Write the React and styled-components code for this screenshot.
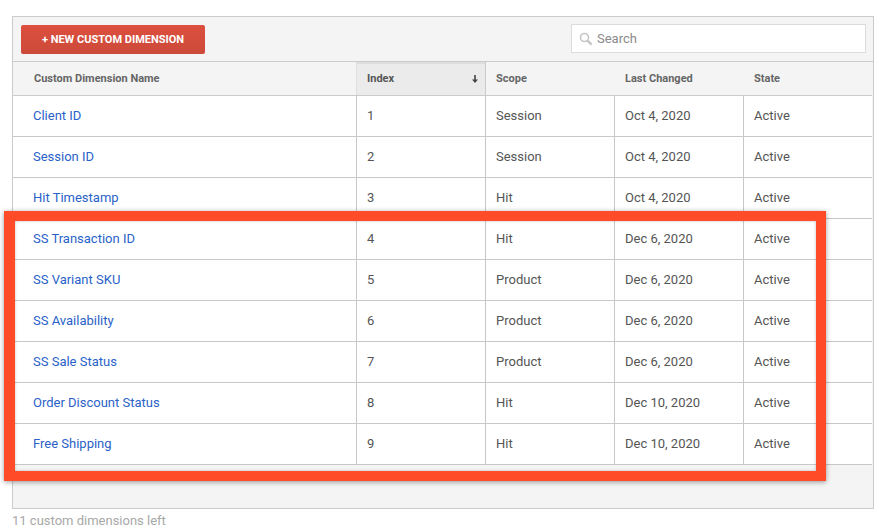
import React from "react";
import styled, { createGlobalStyle } from "styled-components";

const GlobalStyle = createGlobalStyle`
  html, body {
    margin: 0;
    padding: 0;
    background: #fff;
    font-family: Roboto, "Liberation Sans", sans-serif;
  }
`;

const rows = [
  ["Client ID", 1, "Session", "Oct 4, 2020"],
  ["Session ID", 2, "Session", "Oct 4, 2020"],
  ["Hit Timestamp", 3, "Hit", "Oct 4, 2020"],
  ["SS Transaction ID", 4, "Hit", "Dec 6, 2020"],
  ["SS Variant SKU", 5, "Product", "Dec 6, 2020"],
  ["SS Availability", 6, "Product", "Dec 6, 2020"],
  ["SS Sale Status", 7, "Product", "Dec 6, 2020"],
  ["Order Discount Status", 8, "Hit", "Dec 10, 2020"],
  ["Free Shipping", 9, "Hit", "Dec 10, 2020"],
];

function App() {
  return (
    <>
      <GlobalStyle />
      <Page>
        <Panel>
          <Toolbar>
            <NewButton>+ NEW CUSTOM DIMENSION</NewButton>
            <SearchBox>
              <svg viewBox="0 0 14 14" width="14" height="14">
                <circle cx="5.5" cy="5.5" r="4" fill="none" stroke="#c6c6c6" strokeWidth="1.6" />
                <path d="M8.6 8.6l4 4" stroke="#c6c6c6" strokeWidth="2.4" />
              </svg>
              <span>Search</span>
            </SearchBox>
          </Toolbar>
          <HeaderRow>
            <HeadCell $first>Custom Dimension Name</HeadCell>
            <HeadCell $sorted>
              Index
              <SortArrow viewBox="0 0 6 8" width="6" height="8">
                <path d="M2.2 0h1.6v4.4H6L3 8 0 4.4h2.2z" fill="#444" />
              </SortArrow>
            </HeadCell>
            <HeadCell>Scope</HeadCell>
            <HeadCell>Last Changed</HeadCell>
            <HeadCell>State</HeadCell>
          </HeaderRow>
          {rows.map((r) => (
            <Row key={r[1]}>
              <NameCell>{r[0]}</NameCell>
              <Cell>{r[1]}</Cell>
              <Cell>{r[2]}</Cell>
              <Cell>{r[3]}</Cell>
              <Cell>Active</Cell>
            </Row>
          ))}
          <PanelFoot />
        </Panel>
        <FootNote>11 custom dimensions left</FootNote>
        <Highlight />
      </Page>
    </>
  );
}

const Page = styled.div`
  position: relative;
  width: 885px;
  height: 532px;
  overflow: hidden;
  padding: 16px 12px 0;
  box-sizing: border-box;
`;

const Panel = styled.div`
  width: 862px;
  box-sizing: border-box;
  border: 1px solid #cbcbcb;
  background: #f4f4f4;
`;

const Toolbar = styled.div`
  display: flex;
  justify-content: space-between;
  align-items: flex-start;
  height: 45px;
  padding: 8px 7px 0 8px;
  box-sizing: border-box;
  border-bottom: 1px solid #cbcbcb;
`;

const NewButton = styled.button`
  width: 184px;
  height: 29px;
  padding: 0;
  border: 0;
  border-radius: 2px;
  background: linear-gradient(#dd4f3e, #cc4a3a);
  color: #fff;
  font: 700 11px Roboto, sans-serif;
`;

const SearchBox = styled.div`
  display: flex;
  align-items: center;
  gap: 4px;
  width: 295px;
  height: 29px;
  margin-top: -1px;
  padding-left: 7px;
  box-sizing: border-box;
  border: 1px solid #dcdcdc;
  background: #fff;
  color: #8a8a8a;
  font-size: 13px;
`;

const columns = "343px 129px 129px 129px 129px";

const HeaderRow = styled.div`
  display: grid;
  grid-template-columns: ${columns};
  width: 859px;
  height: 34px;
  border-bottom: 1px solid #cbcbcb;
  box-sizing: border-box;
`;

const HeadCell = styled.div`
  display: flex;
  align-items: center;
  justify-content: space-between;
  padding: 0 ${(p) => (p.$sorted ? "7px" : "10px")} 0 ${(p) => (p.$first ? "21px" : p.$sorted ? "10px" : "11px")};
  color: #666;
  font-size: 11px;
  font-weight: 700;
  ${(p) =>
    p.$sorted &&
    `
    margin-right: -1px;
    background: #ebebeb;
    color: #555;
    border-left: 1px solid #dedede;
    border-right: 1px solid #cbcbcb;
    box-shadow: inset 0 2px 0 #dedede;
  `}
`;

const SortArrow = styled.svg`
  flex: none;
`;

const Row = styled.div`
  display: grid;
  grid-template-columns: ${columns};
  width: 859px;
  height: 41px;
  box-sizing: border-box;
  background: #fff;
  border-bottom: 1px solid #c8c8c8;
`;

const Cell = styled.div`
  display: flex;
  align-items: center;
  padding: 0 0 2px 10px;
  border-left: 1px solid #c8c8c8;
  color: #555;
  font-size: 13px;
  line-height: 1;
`;

const NameCell = styled.a`
  display: flex;
  align-items: center;
  padding: 0 0 2px 20px;
  color: #2a62c8;
  font-size: 13px;
  line-height: 1;
`;

const PanelFoot = styled.div`
  height: 43px;
`;

const FootNote = styled.div`
  margin-top: 4px;
  color: #a8a8a8;
  font-size: 13px;
  line-height: 16px;
`;

/* annotation drawn over the table */
const Highlight = styled.div`
  position: absolute;
  left: 4px;
  top: 211px;
  width: 822px;
  height: 270px;
  box-sizing: border-box;
  border: 10px solid #ff4b27;
  border-left-width: 11px;
  box-shadow: 0 1px 5px rgba(0, 0, 0, 0.4), inset 0 0 3px rgba(0, 0, 0, 0.25);
`;

export default App;
